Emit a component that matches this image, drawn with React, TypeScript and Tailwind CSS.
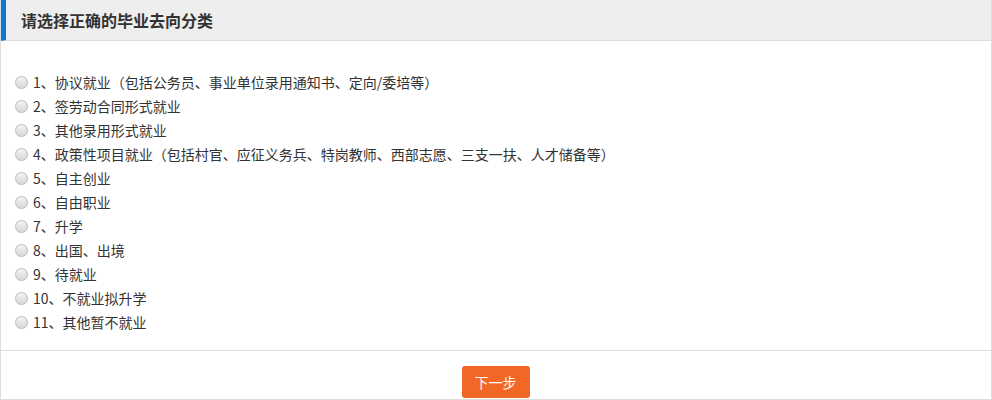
import React from "react";

const items = [
  "1、协议就业（包括公务员、事业单位录用通知书、定向/委培等）",
  "2、签劳动合同形式就业",
  "3、其他录用形式就业",
  "4、政策性项目就业（包括村官、应征义务兵、特岗教师、西部志愿、三支一扶、人才储备等）",
  "5、自主创业",
  "6、自由职业",
  "7、升学",
  "8、出国、出境",
  "9、待就业",
  "10、不就业拟升学",
  "11、其他暂不就业",
];

export default function App() {
  return (
    <div
      className="w-[992px] h-[400px] bg-white text-[#333] [text-spacing-trim:space-all]"
      style={{ fontFamily: '"Microsoft YaHei", "Noto Sans CJK SC", "Noto Sans", sans-serif' }}
    >
      <div className="border-x border-b border-[#dddddd] flex flex-col">
        <div className="h-[41px] bg-[#eeeeee] border-b border-[#dddddd] border-l-[5px] border-l-[#0b78d4] flex items-center pl-[15px]">
          <span className="text-[16px] font-bold text-[#333]">请选择正确的毕业去向分类</span>
        </div>
        <div className="pt-[29px] pb-[16px] pl-[14px] flex flex-col">
          {items.map((t) => (
            <label key={t} className="h-[24px] flex items-center gap-[5px] text-[14px] text-[#333] leading-[24px]">
              <span className="w-[13px] h-[13px] rounded-full border border-[#b9b9b9] bg-gradient-to-b from-[#f5f5f5] to-[#d6d6d6] shrink-0" />
              <span>{t}</span>
            </label>
          ))}
        </div>
        <div className="border-t border-[#dddddd] pt-[15px] pb-px flex justify-center">
          <button className="w-[68px] h-[32px] rounded-[3px] bg-[#f26726] text-white text-[14px] ml-[-1px]">
            下一步
          </button>
        </div>
      </div>
    </div>
  );
}
